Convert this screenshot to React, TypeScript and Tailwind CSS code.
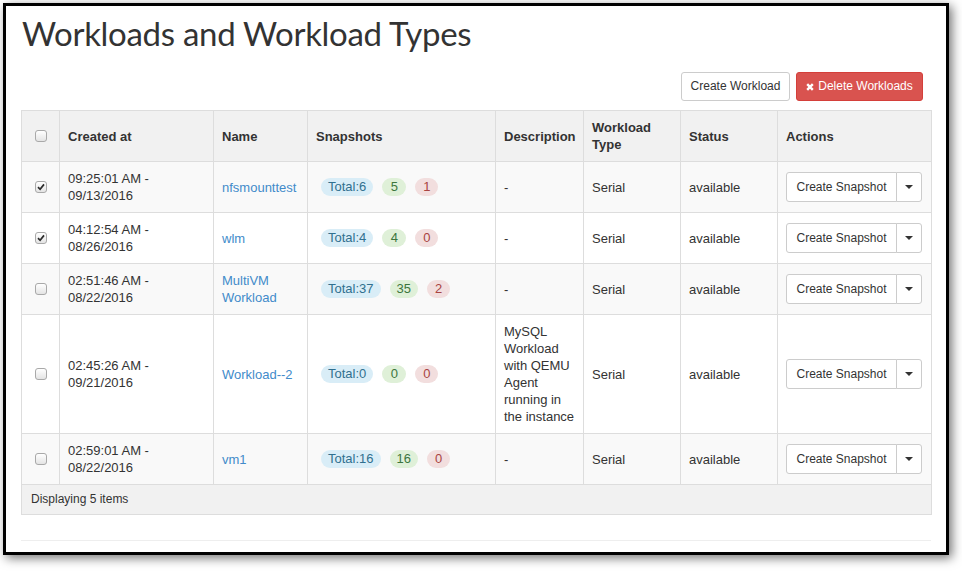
import React from 'react';

type Workload = {
  checked: boolean;
  time: string;
  date: string;
  name: string;
  total: number;
  ok: number;
  failed: number;
  description: string;
};

const workloads: Workload[] = [
  { checked: true, time: '09:25:01 AM', date: '09/13/2016', name: 'nfsmounttest', total: 6, ok: 5, failed: 1, description: '-' },
  { checked: true, time: '04:12:54 AM', date: '08/26/2016', name: 'wlm', total: 4, ok: 4, failed: 0, description: '-' },
  { checked: false, time: '02:51:46 AM', date: '08/22/2016', name: 'MultiVM Workload', total: 37, ok: 35, failed: 2, description: '-' },
  {
    checked: false,
    time: '02:45:26 AM',
    date: '09/21/2016',
    name: 'Workload--2',
    total: 0,
    ok: 0,
    failed: 0,
    description: 'MySQL Workload with QEMU Agent running in the instance',
  },
  { checked: false, time: '02:59:01 AM', date: '08/22/2016', name: 'vm1', total: 16, ok: 16, failed: 0, description: '-' },
];

const Checkbox = ({ checked }: { checked?: boolean }) => (
  <span className="mx-auto flex h-[12px] w-[12px] items-center justify-center rounded-[3px] border border-[#a9a9a9] bg-gradient-to-b from-white to-[#e4e4e4]">
    {checked && (
      <svg width="8" height="8" viewBox="0 0 8 8">
        <path d="M1 4.2 L3.1 6.3 L7 1.4" fill="none" stroke="#2b2b2b" strokeWidth="1.7" />
      </svg>
    )}
  </span>
);

const Caret = () => (
  <span className="h-0 w-0 border-x-[4px] border-t-[4px] border-x-transparent border-t-[#333]" />
);

const App = () => {
  return (
    <div className="h-[571px] w-[962px] bg-white pl-[3px] pt-[3px] font-['Liberation_Sans',Arial,sans-serif] text-[13px] leading-[17px] text-[#333]">
      <div className="h-[552px] w-[946px] border-[3px] border-black bg-white px-[15px] shadow-[3px_3px_10px_rgba(0,0,0,0.55)]">
        {/* Title */}
        <h1 className="mt-[10px] pl-[1px] font-['Lato',sans-serif] text-[33px] leading-[34px] font-normal tracking-[-0.3px] text-[#333]">
          Workloads and Workload Types
        </h1>

        {/* Table actions */}
        <div className="mt-[22px] flex justify-end gap-[6px] pr-[8px]">
          <button className="h-[29px] w-[109px] rounded-[3px] border border-[#ccc] bg-white text-[12px] text-[#333]">
            Create Workload
          </button>
          <button className="flex h-[29px] w-[127px] items-center justify-center gap-[4px] rounded-[3px] border border-[#d43f3a] bg-[#d9534f] text-[12px] text-white">
            <svg width="8" height="8" viewBox="0 0 8 8">
              <path d="M1.2 1.2 L6.8 6.8 M6.8 1.2 L1.2 6.8" stroke="white" strokeWidth="2.4" />
            </svg>
            Delete Workloads
          </button>
        </div>

        {/* Workloads table */}
        <table className="mt-[9px] w-[910px] table-fixed border-collapse border border-[#ddd]">
          <colgroup>
            <col className="w-[38px]" />
            <col className="w-[154px]" />
            <col className="w-[94px]" />
            <col className="w-[188px]" />
            <col className="w-[88px]" />
            <col className="w-[97px]" />
            <col className="w-[97px]" />
            <col className="w-[154px]" />
          </colgroup>
          <thead>
            <tr className="bg-[#f1f1f1] text-left font-bold">
              <th className="border border-[#ddd] px-2 py-2 align-middle">
                <Checkbox />
              </th>
              <th className="border border-[#ddd] px-2 py-2 align-middle">Created at</th>
              <th className="border border-[#ddd] px-2 py-2 align-middle">Name</th>
              <th className="border border-[#ddd] px-2 py-2 align-middle">Snapshots</th>
              <th className="border border-[#ddd] px-2 py-2 align-middle">Description</th>
              <th className="border border-[#ddd] px-2 py-2 align-middle">Workload Type</th>
              <th className="border border-[#ddd] px-2 py-2 align-middle">Status</th>
              <th className="border border-[#ddd] px-2 py-2 align-middle">Actions</th>
            </tr>
          </thead>
          <tbody>
            {workloads.map((w, i) => (
              <tr key={w.name} className={i % 2 === 0 ? 'bg-[#f9f9f9]' : 'bg-white'}>
                <td className="border border-[#ddd] px-2 py-2 align-middle">
                  <Checkbox checked={w.checked} />
                </td>
                <td className="border border-[#ddd] px-2 py-2 align-middle">
                  {w.time} -<br />
                  {w.date}
                </td>
                <td className="border border-[#ddd] px-2 py-2 align-middle">
                  <a href="#" className="text-[#428bca]">
                    {w.name}
                  </a>
                </td>
                <td className="border border-[#ddd] px-2 py-2 align-middle">
                  <div className="ml-[5px] flex gap-[9px]">
                    <span className="h-[18px] rounded-[9px] bg-[#d9edf7] px-[7px] leading-[18px] text-[#31708f]">
                      Total:{w.total}
                    </span>
                    <span className="h-[18px] min-w-[24px] rounded-[9px] bg-[#dff0d8] px-[7px] text-center leading-[18px] text-[#3c763d]">
                      {w.ok}
                    </span>
                    <span className="h-[18px] min-w-[23px] rounded-[9px] bg-[#f2dede] px-[7px] text-center leading-[18px] text-[#a94442]">
                      {w.failed}
                    </span>
                  </div>
                </td>
                <td className="border border-[#ddd] py-2 pl-2 pr-[4px] align-middle">{w.description}</td>
                <td className="border border-[#ddd] px-2 py-2 align-middle">Serial</td>
                <td className="border border-[#ddd] px-2 py-2 align-middle">available</td>
                <td className="border border-[#ddd] px-2 py-2 align-middle">
                  <div className="flex h-[30px] text-[12px]">
                    <button className="w-[111px] rounded-l-[3px] border border-[#ccc] bg-white text-[#333]">
                      Create Snapshot
                    </button>
                    <button className="-ml-px flex w-[26px] items-center justify-center rounded-r-[3px] border border-[#ccc] bg-white">
                      <Caret />
                    </button>
                  </div>
                </td>
              </tr>
            ))}
          </tbody>
          <tfoot>
            <tr className="bg-[#f1f1f1]">
              <td colSpan={8} className="border border-[#ddd] px-[9px] py-[6px] text-[12px]">
                Displaying 5 items
              </td>
            </tr>
          </tfoot>
        </table>

        <div className="mt-[25px] w-[910px] border-t border-[#eee]" />
      </div>
    </div>
  );
};

export default App;
